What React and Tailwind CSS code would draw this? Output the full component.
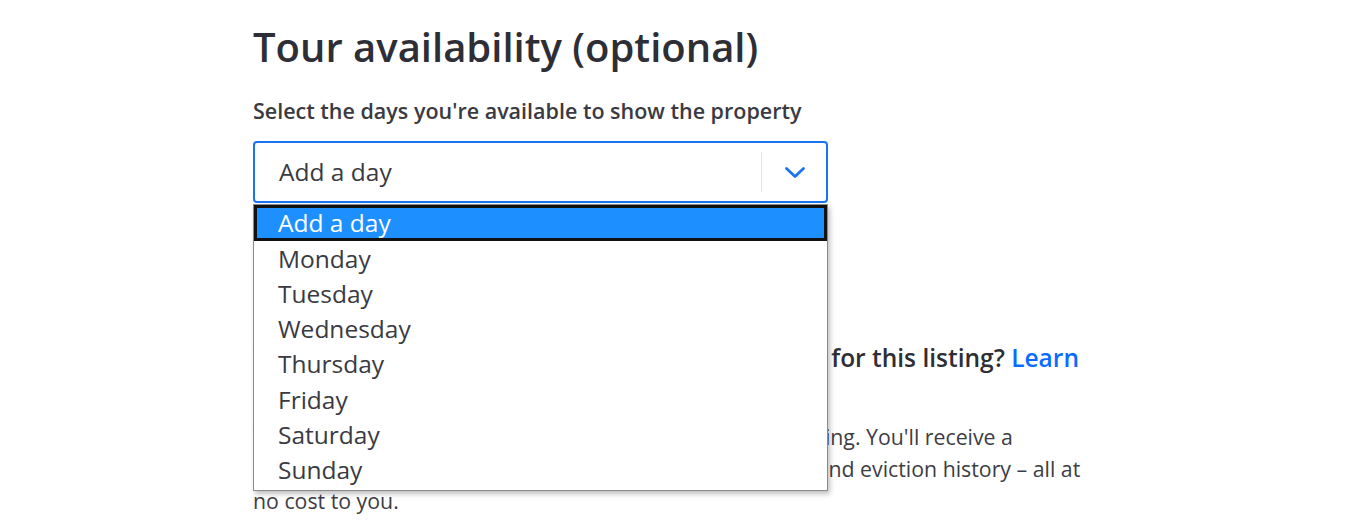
import { useState } from "react";

const days = ["Add a day", "Monday", "Tuesday", "Wednesday", "Thursday", "Friday", "Saturday", "Sunday"];

const Chevron = () => (
  <svg width="22" height="13" viewBox="0 0 22 13" fill="none">
    <path d="M2.5 2.5l8.5 8 8.5-8" stroke="#1a73f0" strokeWidth="2.8" strokeLinecap="round" strokeLinejoin="round" />
  </svg>
);

const App = () => {
  const [selected, setSelected] = useState(0);

  return (
    <div className="h-[527px] overflow-hidden bg-white font-['Open_Sans',sans-serif] text-[#2e2e36]">
      <div className="ml-[253px] w-[860px] pt-[22px]">
        <h2 className="text-[40px] font-semibold leading-[50px]">Tour availability (optional)</h2>

        <p className="mt-[25px] text-[21.5px] font-semibold leading-[28px] text-[#3a3a42]">
          Select the days you're available to show the property
        </p>

        <div className="relative mt-[16px] w-[575px]">
          <div className="flex h-[62px] items-center rounded-[4px] border-2 border-[#1a73f0] bg-white">
            <span className="flex-1 pl-[24px] text-[24.5px] text-[#3a3a42]">{days[selected]}</span>
            <span className="h-[40px] w-px bg-[#e3e3e6]" />
            <span className="flex w-[64px] justify-center pl-[2px]">
              <Chevron />
            </span>
          </div>

          <ul className="absolute left-0 top-[63px] z-10 w-[575px] border border-[#8a8a8a] bg-white pb-[2px] shadow-[2px_3px_5px_rgba(0,0,0,0.25)]">
            {days.map((d, i) => (
              <li
                key={d}
                onClick={() => setSelected(i)}
                className={
                  i === 0
                    ? "h-[35.5px] border-[3px] border-[#111] bg-[#1e8fff] pl-[21px] text-[24.5px] leading-[29px] text-white"
                    : "h-[35.3px] pl-[24px] text-[24.5px] leading-[35px] text-[#3a3a42]"
                }
              >
                {d}
              </li>
            ))}
          </ul>
        </div>

        <h3 className="mt-[140px] text-[24.5px] font-semibold leading-[30px]">
          Would you like us to screen your renters for free for this listing? <span className="text-[#0a6cff]">Learn</span>
          <br />
          <span className="text-[#0a6cff]">more</span>
        </h3>

        <p className="mt-[18px] text-[21.3px] leading-[32px] text-[#3d3d45]">
          Turn on tenant screening, when renters apply for your listing. You'll receive a
          <br />
          reports on every applicant's credit, criminal background, and eviction history – all at
          <br />
          no cost to you.
        </p>
      </div>
    </div>
  );
};

export default App;
